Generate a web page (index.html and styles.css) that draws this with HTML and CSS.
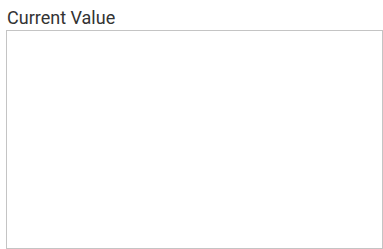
FILE: index.html
```html
<!DOCTYPE html>
<html lang="en">
<head>
    <meta charset="UTF-8">
    <title>Current Value</title>
    <link rel="stylesheet" href="styles.css">
</head>
<body>
    <div class="field">
        <label class="label" for="currentValue">Current Value</label>
        <textarea id="currentValue" class="value-box"></textarea>
    </div>
</body>
</html>
```

FILE: styles.css
```css
body {
    font-family: 'Roboto', sans-serif;
    margin: 0;
    padding: 0;
    background: #ffffff;
    color: #333333;
}

.field {
    display: flex;
    flex-direction: column;
    padding: 6px 0 0 6px;
}

.label {
    font-size: 18px;
    line-height: 24px;
    padding-left: 1px;
}

.value-box {
    box-sizing: border-box;
    width: 377px;
    height: 219px;
    margin: 0;
    border: 1px solid #c4c4c4;
    resize: none;
    font-family: 'Roboto', sans-serif;
    font-size: 14px;
    outline: none;
}
```
